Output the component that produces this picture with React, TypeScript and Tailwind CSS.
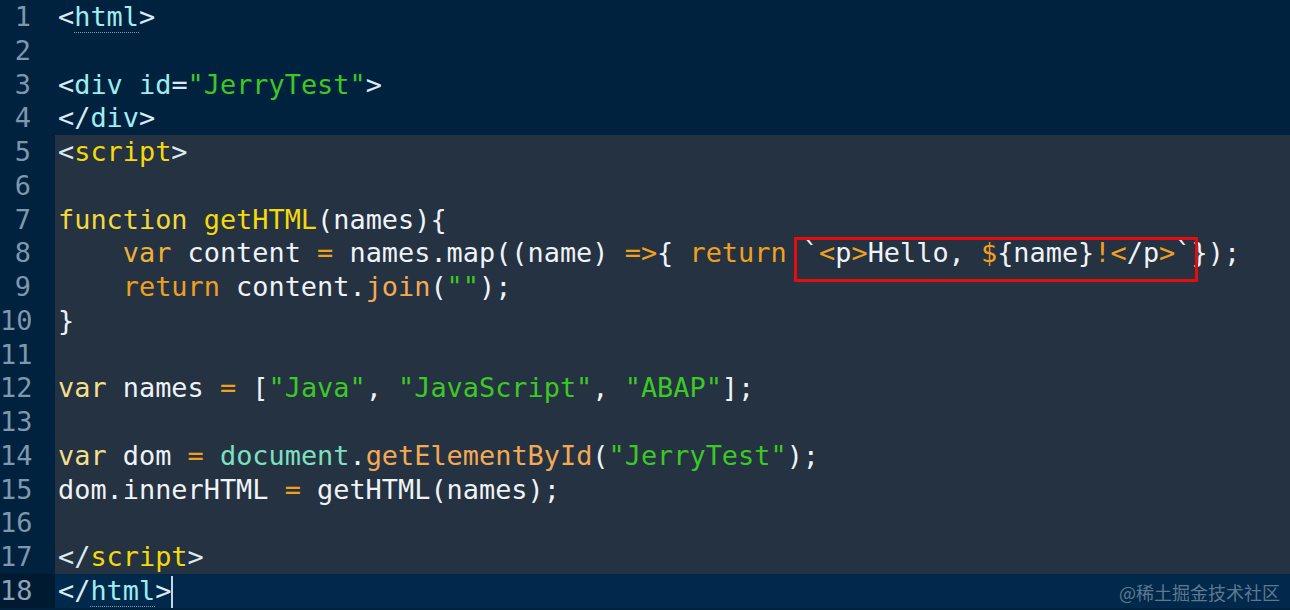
import React from 'react';

type Tok = [string, string];
type Item = Tok | { box: Tok[] };

const W = '#eef3f8';
const P = '#dce9f3';
const CY = '#9eeef0';
const GR = '#3cc825';
const YL = '#f5d90a';
const FN = '#f3da3a';
const VR = '#f2df8c';
const OR = '#f0a020';
const SF = '#f4aa55';
const DOC = '#7ee0c0';

const lines: Item[][] = [
  [['<', P], ['html', CY], ['>', P]],
  [],
  [['<', P], ['div', CY], [' ', W], ['id', CY], ['=', P], ['"JerryTest"', GR], ['>', P]],
  [['</', P], ['div', CY], ['>', P]],
  [['<', P], ['script', YL], ['>', P]],
  [],
  [['function', FN], [' ', W], ['getHTML', YL], ['(names){', W]],
  [
    ['    ', W], ['var', '#eeb038'], [' content ', W], ['=', OR], [' names.map((name) ', W], ['=>', OR], ['{ ', W],
    ['return', OR], [' ', W],
    { box: [['`', W], ['<', OR], ['p', W], ['>', OR], ['Hello, ', W], ['$', OR], ['{name}', W], ['!', OR], ['<', OR], ['/p', W], ['>', OR], ['`', W]] },
    ['});', W],
  ],
  [['    ', W], ['return', OR], [' content.', W], ['join', SF], ['(', W], ['""', GR], [');', W]],
  [['}', W]],
  [],
  [['var', VR], [' names ', W], ['=', OR], [' [', W], ['"Java"', GR], [', ', W], ['"JavaScript"', GR], [', ', W], ['"ABAP"', GR], ['];', W]],
  [],
  [['var', VR], [' dom ', W], ['=', OR], [' ', W], ['document', DOC], ['.', W], ['getElementById', SF], ['(', W], ['"JerryTest"', GR], [');', W]],
  [['dom.innerHTML ', W], ['=', OR], [' getHTML(names);', W]],
  [],
  [['</', P], ['script', YL], ['>', P]],
  [['</', P], ['html', CY], ['>', P]],
];

function Tokens({ toks }: { toks: Tok[] }) {
  return (
    <>
      {toks.map(([t, c], i) =>
        t === 'html' ? (
          <span key={i} style={{ color: c }} className="border-b border-dotted border-[#8597ab]">
            {t}
          </span>
        ) : (
          <span key={i} style={{ color: c }}>
            {t}
          </span>
        )
      )}
    </>
  );
}

export default function App() {
  return (
    <div className="relative w-[1290px] h-[610px] overflow-hidden bg-[#01223f] font-['DejaVu_Sans_Mono',monospace] text-[26.9px] leading-[33.75px]">
      {lines.map((line, idx) => {
        const n = idx + 1;
        const script = n >= 5 && n <= 17;
        const active = n === 18;
        return (
          <div key={n} className="flex h-[33.75px]">
            <div
              className={`w-[55px] shrink-0 pr-[24px] text-right whitespace-nowrap ${
                active ? 'bg-[#001a31] text-[#8da3b8]' : 'text-[#7f97ad]'
              }`}
            >
              {n}
            </div>
            <div
              className={`flex-1 pl-[3px] whitespace-pre ${
                script ? 'bg-[#243241]' : active ? 'bg-[#01294b]' : ''
              }`}
            >
              {line.map((it, i) =>
                Array.isArray(it) ? (
                  <Tokens key={i} toks={[it]} />
                ) : (
                  <span key={i} className="relative">
                    <Tokens toks={it.box} />
                    <span className="absolute -left-[9px] -right-[6px] top-0 -bottom-[14px] border-[3px] border-[#e30d0d] pointer-events-none" />
                  </span>
                )
              )}
              {active && <span className="inline-block w-[2px] h-[32px] align-middle bg-[#c9d6e2]" />}
            </div>
          </div>
        );
      })}
      <div className="absolute right-[10px] bottom-[6px] text-[18px] leading-[24px] text-[#5f7890] font-['Noto_Sans_CJK_SC',sans-serif]">
        @稀土掘金技术社区
      </div>
    </div>
  );
}
